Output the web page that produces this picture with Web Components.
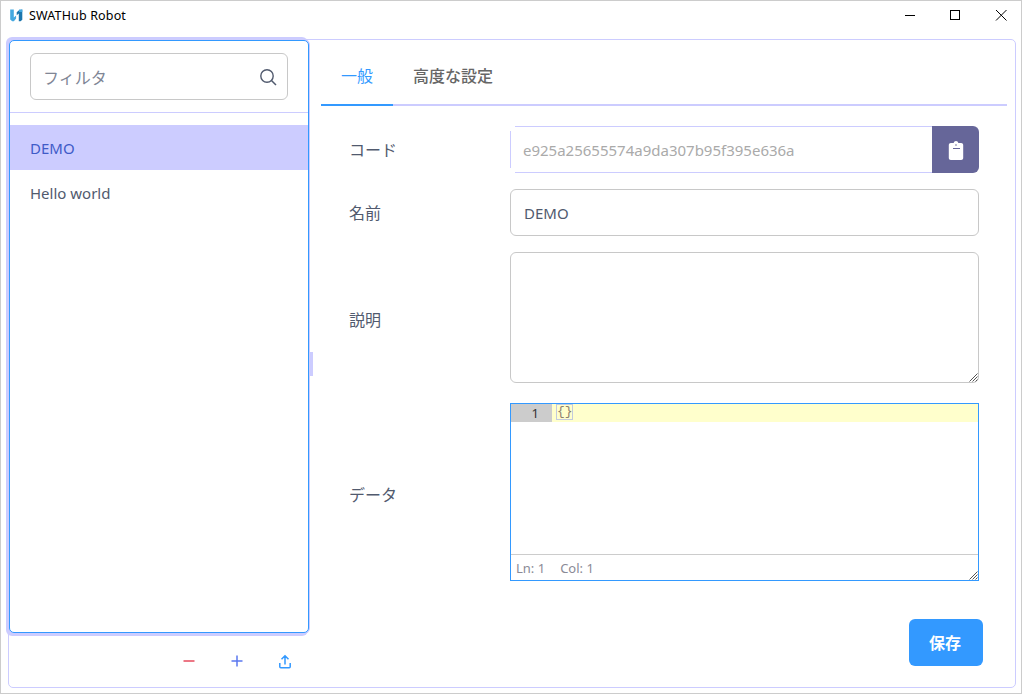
<!DOCTYPE html>
<html lang="ja"><head><meta charset="utf-8"><title>SWATHub Robot</title>
<style>
html,body{margin:0;padding:0;background:#fff}
body{font:15px "Noto Sans","Noto Sans CJK JP",sans-serif;color:#515a6e;width:1022px;height:694px;overflow:hidden}
</style></head><body>
<app-window>
  <title-bar slot="title" label="SWATHub Robot"></title-bar>
  <side-panel slot="side">
    <list-item selected>DEMO</list-item>
    <list-item>Hello world</list-item>
  </side-panel>
  <tab-bar slot="main">
    <tab-item active>一般</tab-item>
    <tab-item>高度な設定</tab-item>
  </tab-bar>
  <form-row slot="main" label="コード" top="20"><code-field value="e925a25655574a9da307b95f395e636a"></code-field></form-row>
  <form-row slot="main" label="名前"><text-field value="DEMO"></text-field></form-row>
  <form-row slot="main" label="説明" shift="4"><area-field></area-field></form-row>
  <form-row slot="main" label="データ" top="20" shift="5"><code-editor></code-editor></form-row>
  <save-button slot="main">保存</save-button>
</app-window>
<script>
function def(name, css, html){
  customElements.define(name, class extends HTMLElement{
    constructor(){super();this.attachShadow({mode:'open'});}
    connectedCallback(){ this.shadowRoot.innerHTML='<style>'+css+'</style>'+(typeof html==='function'?html(this):html); }
  });
}
const grip='<svg class="grip" width="10" height="10" viewBox="0 0 10 10"><path d="M9.500 1.500 1.500 9.500M9.500 4.500 4.500 9.500M9.500 7.500 7.500 9.500" stroke="#555" stroke-width="1" fill="none"/></svg>';
def('app-window',`
  :host{display:flex;flex-direction:column;box-sizing:border-box;width:1022px;height:694px;border:1px solid #ccc;background:#fff}
  .frame{display:flex;box-sizing:border-box;width:1008px;height:649px;margin-left:7px;border:1px solid #ccf;border-radius:5px}
  .side{flex:none;width:304px}
  .main{flex:none;width:702px;padding-left:8px;display:flex;flex-direction:column;box-sizing:border-box}
`,`<slot name="title"></slot><div class="frame"><div class="side"><slot name="side"></slot></div><div class="main"><slot name="main"></slot></div></div>`);
def('title-bar',`
  :host{display:flex;align-items:center;box-sizing:border-box;height:38px;padding-bottom:10px;flex:none;color:#000;font:12.500px "Noto Sans",sans-serif}
  .logo{margin:0 6px 0 9px;display:block}
  .t{flex:1;letter-spacing:.15px}
  .ctl{display:flex;gap:33px;margin-right:14px}
  .ctl svg{display:block}
  .ctl svg:last-child{margin-left:1px}
`,el=>`<svg class="logo" width="13" height="13" viewBox="0 0 13 13"><path d="M.2.500h3.600v8l2.300-2.100v3.100L3.900 12.300H2.200L.2 10.500z" fill="#45a9e0"/><path d="M12.300.500v10.200l-1.700 1.600H8.800V4.400L6.700 6.300V3.200L9 1.300z" fill="#1c76ad"/><path d="M12.300.500v2.500H9V.500z" fill="#45a9e0"/></svg><div class="t">${el.getAttribute('label')}</div>
  <div class="ctl"><svg width="12" height="12" viewBox="0 0 12 12"><path d="M1 6.500h10" stroke="#000"/></svg>
  <svg width="12" height="12" viewBox="0 0 12 12"><rect x="1.500" y="1.500" width="9" height="9" fill="none" stroke="#000"/></svg>
  <svg width="12" height="12" viewBox="0 0 12 12"><path d="M1 1l10.500 10.500M11.500 1L1 11.500" stroke="#000" fill="none"/></svg></div>`);
def('side-panel',`
  :host{display:flex;flex-direction:column;height:100%;position:relative}
  .card{box-sizing:border-box;width:300px;height:593px;background:#fff;border:1px solid #39f;border-radius:5px;
    box-shadow:0 0 0 1px #ccf,-2px -2px 0 1px #ccf,-2px 2px 0 1px #ccf}
  .search{padding:12px 20px 12px 20px;border-bottom:1px solid #ccf}
  .box{box-sizing:border-box;height:47px;border:1px solid #c8c8c8;border-radius:6px;display:flex;align-items:center;padding:0 10px 0 12px;color:#808695;font-size:16px}
  .box span{flex:1}
  .list{padding-top:12px}
  .foot{display:flex;justify-content:flex-end;gap:36px;padding:20px 22px 0 0;align-items:center;height:16px}
  .split{position:absolute;left:300px;top:312px;width:4px;height:24px;background:#ccf}
`,`<div class="card"><div class="search"><div class="box"><span>フィルタ</span><svg width="18" height="18" viewBox="0 0 18 18"><circle cx="8" cy="8" r="6.200" fill="none" stroke="#515a6e" stroke-width="1.400"/><path d="M12.500 12.500l4.500 4.500" stroke="#515a6e" stroke-width="1.500"/></svg></div></div><div class="list"><slot></slot></div></div>
<div class="split"></div>
<div class="foot">
<svg width="12" height="16" viewBox="0 0 12 16"><path d="M.5 8h11" stroke="#e64a5c" stroke-width="1.500"/></svg>
<svg width="12" height="16" viewBox="0 0 12 16"><path d="M.5 8h11M6 2.500v11" stroke="#5b78f0" stroke-width="1.500"/></svg>
<svg width="12" height="16" viewBox="0 0 12 16"><path d="M6 11.500V3M2.500 6.300 6 2.800l3.500 3.500M.8 10v3.800c0 .6.400 1 1 1h8.400c.6 0 1-.4 1-1V10" fill="none" stroke="#39f" stroke-width="1.500"/></svg>
</div>`);
def('list-item',`
  :host{display:flex;align-items:center;box-sizing:border-box;height:45px;padding:0 20px;font-size:15px;color:#515a6e}
  :host([selected]){background:#ccf;color:#3f5bc8}
`,`<slot></slot>`);
def('tab-bar',`
  :host{display:flex;box-sizing:border-box;height:66px;width:686px;flex:none;border-bottom:2px solid #ccf}
`,`<slot></slot>`);
def('tab-item',`
  :host{display:flex;align-items:center;padding:6px 20px 0;height:66px;box-sizing:border-box;font-size:16px;font-weight:500;color:#666;border-bottom:2px solid transparent}
  :host([active]){color:#39f;border-bottom-color:#39f;font-weight:400}
`,`<slot></slot>`);
def('form-row',`
  :host{display:flex;align-items:center;flex:none;margin:16px 0 0 28px;width:630px}
  :host([top="20"]){margin-top:20px}
  .l{width:161px;flex:none;font-size:16px;color:#515a6e;box-sizing:border-box;padding-bottom:2px}
  .f{flex:1;min-width:0}
`,el=>`<div class="l" style="padding-top:${el.getAttribute('shift')||0}px">${el.getAttribute('label')}</div><div class="f"><slot></slot></div>`);
def('code-field',`
  :host{display:flex;height:47px}
  .i{flex:1;box-sizing:border-box;background:
      linear-gradient(#ccf,#ccf) 5px 0/100% 1px no-repeat,
      linear-gradient(#ccf,#ccf) 5px 100%/100% 1px no-repeat,
      linear-gradient(#ccf,#ccf) 0 5px/1px calc(100% - 10px) no-repeat;
    color:#aaa;font-size:15px;display:flex;align-items:center;padding-left:13px}
  .b{width:47px;background:#669;border-radius:0 6px 6px 0;display:flex;align-items:center;justify-content:center}
`,el=>`<div class="i">${el.getAttribute('value')}</div><div class="b"><svg width="16" height="21" viewBox="0 0 16 21"><path fill-rule="evenodd" fill="#fff" d="M8 2c1.200 0 2.100.8 2.300 2h2.900c1.100 0 2 .9 2 2v13c0 1.100-.9 2-2 2H2.800c-1.100 0-2-.9-2-2V6c0-1.100.9-2 2-2h2.900C5.900 2.800 6.800 2 8 2zM8 5.200a.8.800 0 1 0 0 1.600.8.800 0 0 0 0-1.600zM5 9v1h7V9z"/></svg></div>`);
def('text-field',`
  :host{display:flex;align-items:center;height:47px;box-sizing:border-box;border:1px solid #c8c8c8;border-radius:6px;padding-left:13px;font-size:15px;color:#515a6e}
`,el=>`${el.getAttribute('value')}`);
def('area-field',`
  :host{display:block;position:relative;height:131px;box-sizing:border-box;border:1px solid #c8c8c8;border-radius:6px}
  .grip{position:absolute;right:0;bottom:0}
`,grip);
def('code-editor',`
  :host{display:flex;flex-direction:column;position:relative;height:178px;box-sizing:border-box;border:1px solid #39f;background:#fff}
  .line{display:flex;height:18px;background:#ffc;font:13px "Liberation Mono",monospace;line-height:18px;color:#333}
  .n{width:41px;background:#ccc;text-align:right;padding-right:13px;box-sizing:border-box;flex:none;font-family:"Noto Sans",sans-serif;font-size:13px}
  .c{margin-left:4px;color:#8a8070;outline:1px solid #c3cbdc;outline-offset:-1px;height:16px;line-height:16px;border-left:1px solid #aaa;font-size:13px}
  .sp{flex:1}
  .st{height:26px;border-top:1px solid #ccc;box-sizing:border-box;font-size:13px;color:#8a8a96;display:flex;align-items:center;padding:1px 0 0 5px;gap:15px}
  .grip{position:absolute;right:0;bottom:0}
`,`<div class="line"><div class="n">1</div><div class="c">{}</div></div><div class="sp"></div><div class="st"><span>Ln: 1</span><span>Col: 1</span></div>`+grip);
def('save-button',`
  :host{display:flex;align-items:center;justify-content:center;align-self:flex-start;margin:38px 0 0 588px;box-sizing:border-box;width:74px;height:47px;padding:0 2px 2px 0;background:#39f;color:#fff;border-radius:6px;font-size:16px;font-weight:700}
`,`<slot></slot>`);
</script>
</body></html>
